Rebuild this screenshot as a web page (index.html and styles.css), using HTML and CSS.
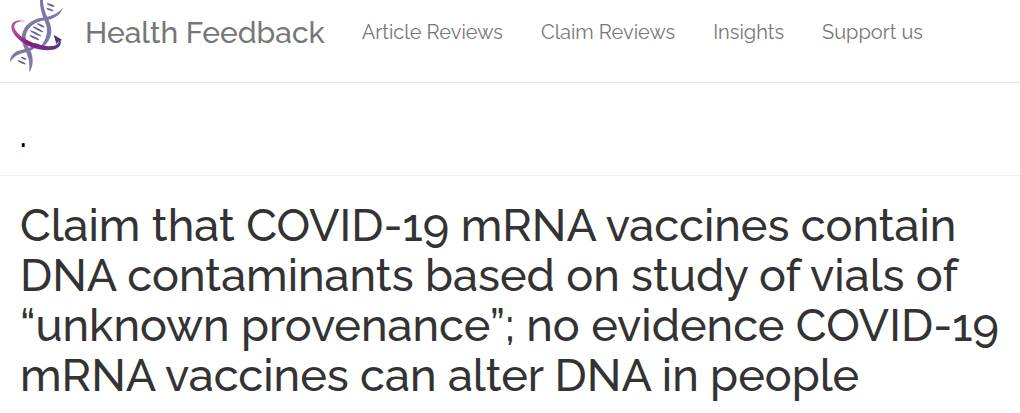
FILE: index.html
```html
<!DOCTYPE html>
<html lang="en">
<head>
    <meta charset="UTF-8">
    <meta name="viewport" content="width=device-width, initial-scale=1.0">
    <title>Health Feedback</title>
    <link rel="stylesheet" href="styles.css">
</head>
<body>
    <header class="navbar">
        <a class="brand" href="#">
            <svg class="logo" viewBox="0 0 210 246" aria-hidden="true">
                <defs>
                    <linearGradient id="ribbon" x1="35" y1="70" x2="185" y2="130" gradientUnits="userSpaceOnUse">
                        <stop offset="0" stop-color="#b9609f"/>
                        <stop offset="0.4" stop-color="#8b1a80"/>
                        <stop offset="0.75" stop-color="#6b2f8d"/>
                        <stop offset="1" stop-color="#493381"/>
                    </linearGradient>
                </defs>
                <!-- strands -->
                <g fill="#7d78a6">
                    <path d="M120 0H129C129 22 137 41 146 60C159 88 157 115 132 139L122 140C142 113 146 91 135 65C125 43 119 22 120 0Z"/>
                    <path d="M189 23C180 47 160 58 134 61C104 65 79 85 77 110C77 127 86 143 94 158C101 177 99 199 89 216C87 212 88 207 88 201C89 184 84 168 76 151C66 131 62 111 69 94C78 70 103 56 132 52C156 48 173 40 189 23Z"/>
                    <path d="M120 133C105 143 96 153 79 157C58 160 42 169 31 185C28 176 36 163 47 156C62 147 77 150 92 141L105 129Z"/>
                </g>
                <!-- rungs -->
                <g fill="#69639a">
                    <ellipse cx="152" cy="15" rx="12" ry="3" transform="rotate(21 152 15)"/>
                    <ellipse cx="150" cy="29" rx="11" ry="3" transform="rotate(22 150 29)"/>
                    <ellipse cx="122" cy="76" rx="12" ry="3" transform="rotate(27 122 76)"/>
                    <ellipse cx="114" cy="88" rx="17" ry="3" transform="rotate(27 114 88)"/>
                    <ellipse cx="107" cy="100" rx="19" ry="3" transform="rotate(27 107 100)"/>
                    <ellipse cx="103" cy="113" rx="16" ry="3" transform="rotate(27 103 113)"/>
                    <ellipse cx="71" cy="175" rx="9" ry="3" transform="rotate(21 71 175)"/>
                    <ellipse cx="65" cy="187" rx="13" ry="3" transform="rotate(24 65 187)"/>
                </g>
                <!-- orbit arrow -->
                <path fill="url(#ribbon)" d="M81 65C57 61 42 68 43 82C46 99 72 119 101 129C132 140 163 142 172 132C176 128 177 125 176 119L181 120C185 131 180 141 168 146C143 156 103 148 74 131C48 116 33 95 34 78C37 62 56 58 81 65Z"/>
                <path fill="#493381" d="M161 104L187 120L178 122L169 132Z"/>
            </svg>
            <span class="brand-name">Health Feedback</span>
        </a>
        <nav class="menu">
            <a href="#">Article Reviews</a>
            <a href="#">Claim Reviews</a>
            <a href="#">Insights</a>
            <a href="#">Support us</a>
        </nav>
    </header>
    <div class="topbar">.</div>
    <main class="content">
        <h1>Claim that COVID-19 mRNA vaccines contain DNA contaminants based on study of vials of “unknown provenance”; no evidence COVID-19 mRNA vaccines can alter DNA in people</h1>
    </main>
</body>
</html>
```
FILE: styles.css
```css
body {
    margin: 0;
    background-color: #fff;
    color: #333;
    font-family: Raleway, Lato, "Open Sans", sans-serif;
}
a {
    color: #777;
    text-decoration: none;
}
.navbar {
    display: flex;
    border-bottom: 1px solid #e7e7e7;
}
.brand {
    display: flex;
    gap: 15px;
    font-size: 30px;
    font-weight: 500;
    line-height: 66px;
}
.logo {
    width: 70px;
    height: 82px;
}
.menu {
    display: flex;
    gap: 38px;
    margin-left: 37px;
    font-size: 20px;
    font-weight: 400;
    line-height: 64px;
}
.topbar {
    padding: 34px 20px 18px;
    border-bottom: 1px solid #eee;
    color: #000;
    font-size: 30px;
    font-weight: 600;
    line-height: 40px;
}
.content {
    padding: 25px 20px 13px;
}
h1 {
    margin: 0;
    font-size: 45px;
    font-weight: 500;
    line-height: 50px;
}
```
